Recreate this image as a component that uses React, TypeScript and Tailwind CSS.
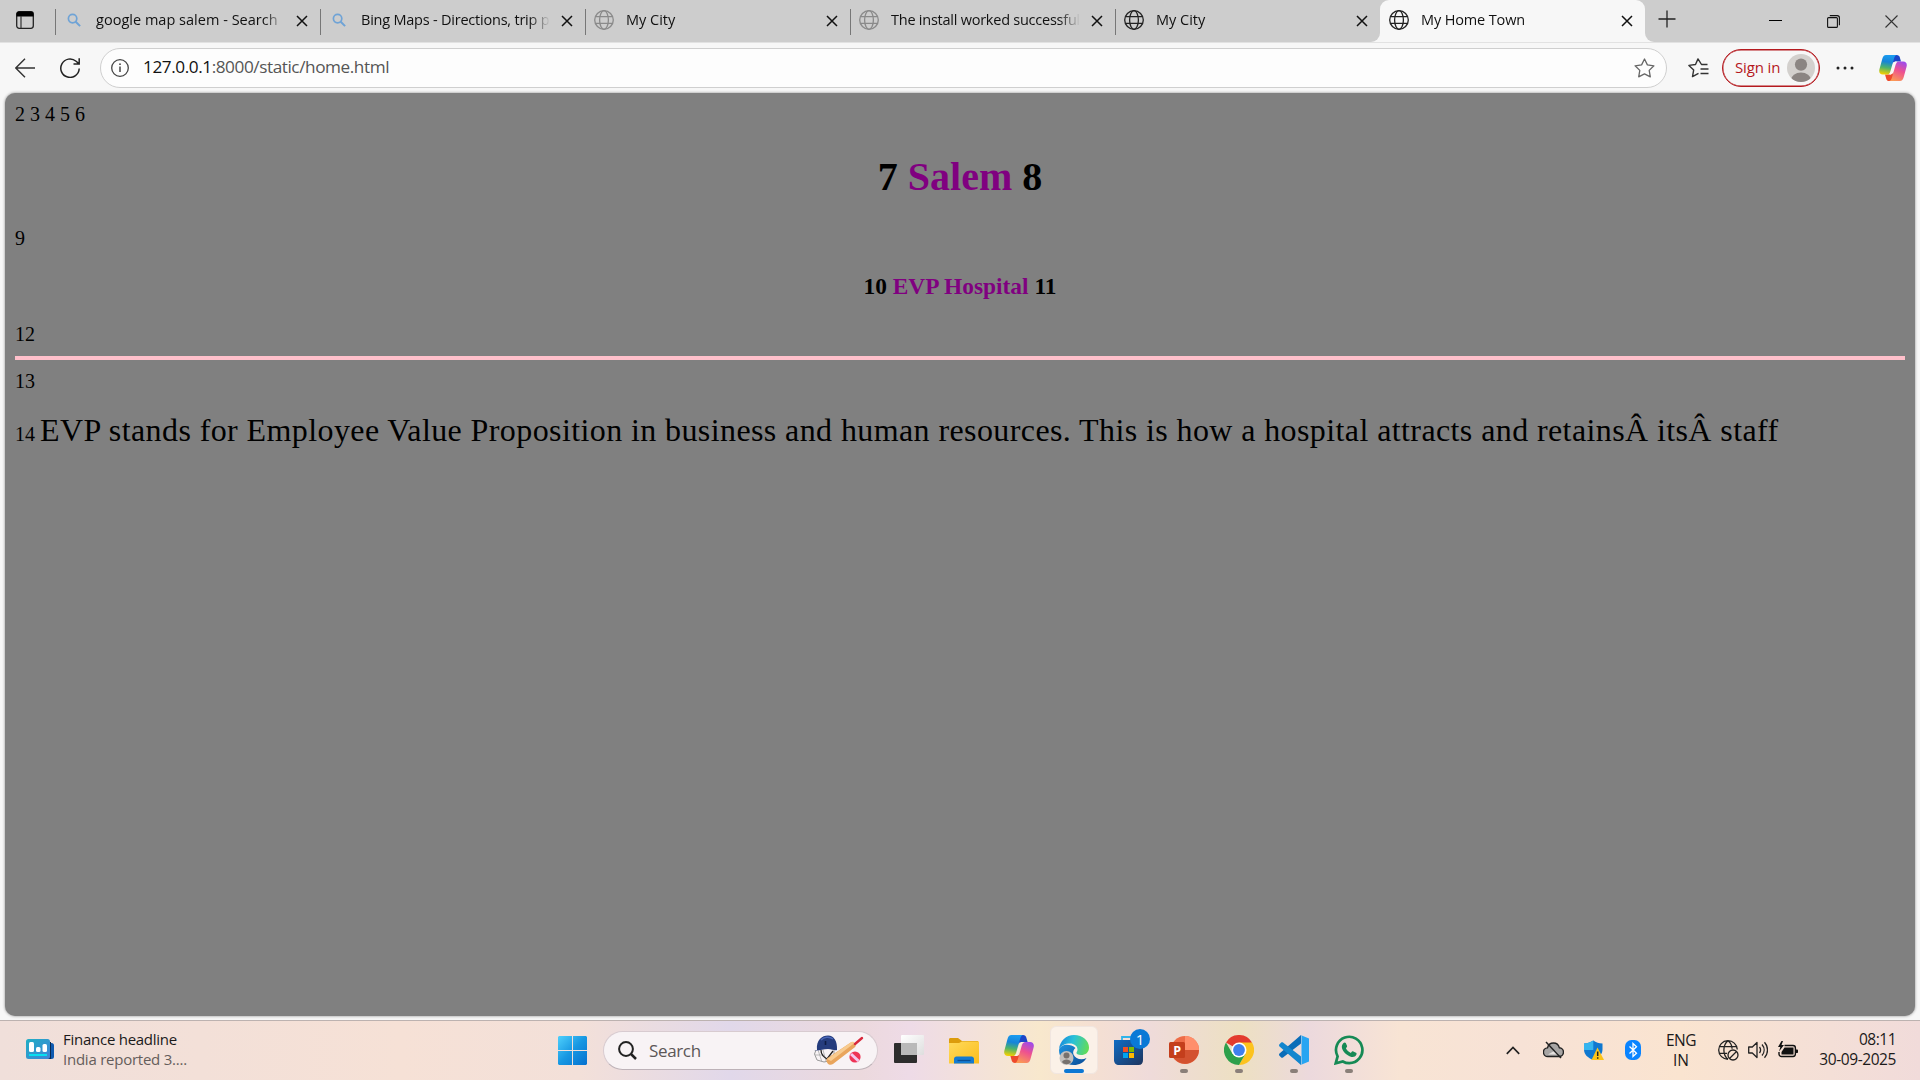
import React from "react";

const UI = "font-['Open_Sans','Noto_Sans',sans-serif]";

function GlobeIcon({ className }: { className: string }) {
  return (
    <svg className={className} width="20" height="20" viewBox="0 0 20 20" fill="none" stroke="currentColor" strokeWidth="1.3">
      <circle cx="10" cy="10" r="9.3" />
      <ellipse cx="10" cy="10" rx="4.4" ry="9.3" />
      <path d="M1.5 6.6h17M1.5 13.4h17" />
    </svg>
  );
}

function LensIcon() {
  return (
    <svg className="ml-[3px] mr-[3px] text-[#6fa3d6]" width="14" height="14" viewBox="0 0 14 14" fill="none" stroke="currentColor" strokeWidth="1.7">
      <circle cx="5.6" cy="5.6" r="4.2" />
      <path d="M8.7 8.7l4.4 4.4" strokeWidth="2" />
    </svg>
  );
}

function CloseIcon() {
  return (
    <svg width="12" height="12" viewBox="0 0 12 12" fill="none" stroke="#111" strokeWidth="1.5">
      <path d="M1 1l10 10M11 1L1 11" />
    </svg>
  );
}

function CopilotIcon({ id, width, height }: { id: string; width: number; height: number }) {
  return (
    <svg width={width} height={height} viewBox="0 0 30 28">
      <defs>
        <linearGradient id={id + "a"} x1="0.5" y1="0" x2="0.35" y2="1">
          <stop offset="0" stopColor="#1a9cf0" />
          <stop offset="0.35" stopColor="#1684d8" />
          <stop offset="0.65" stopColor="#4db36b" />
          <stop offset="1" stopColor="#f5d000" />
        </linearGradient>
        <linearGradient id={id + "b"} x1="0.7" y1="0" x2="0.3" y2="1">
          <stop offset="0" stopColor="#a04be8" />
          <stop offset="0.45" stopColor="#ee5190" />
          <stop offset="1" stopColor="#fb9a55" />
        </linearGradient>
      </defs>
      <path d="M15 0h4c2 0 2.800 1 3.300 2.500L23.600 7H18c-2 0-3 .8-3.600 2.600z" fill="#1b45c8" />
      <path d="M15 28h-4c-2 0-2.800-1-3.300-2.500L6.400 21H12c2 0 3-.8 3.600-2.600z" fill="#ee4a2c" />
      <path d="M7.500 0H19c-1.500.4-2.200 1.600-2.700 3.200l-4.100 14.200c-.7 2.400-1.700 3.600-4 3.600H4c-3 0-4.500-2.400-3.600-5.600L3.500 4C4.200 1.500 5.300 0 7.500 0z" fill={"url(#" + id + "a)"} />
      <path d="M22.500 28H11c1.500-.4 2.200-1.600 2.700-3.200l4.100-14.200c.7-2.400 1.700-3.600 4-3.600H26c3 0 4.500 2.400 3.600 5.600L26.500 24c-.7 2.500-1.800 4-4 4z" fill={"url(#" + id + "b)"} />
      <path d="M17.600 7h1.900c-2.200.8-3 2.200-3.700 4.300l-3 9.700h-2c1.500-.8 2-1.700 2.600-3.500l2.300-8C16.200 8.200 16.800 7.500 17.600 7z" fill="#fdf3ec" />
    </svg>
  );
}

type TabProps = { title: string; icon: "lens" | "dim" | "dark"; active?: boolean; tracking: string };

function Tab({ title, icon, active, tracking }: TabProps) {
  return (
    <div className={"relative flex h-[42px] w-[265px] shrink-0 items-start " + (active ? "rounded-t-[9px] bg-[#f7f7f7]" : "")}>
      {active && (
        <>
          <div className="absolute -left-[9px] bottom-0 size-[9px] bg-[#f7f7f7]"><div className="size-full rounded-br-[9px] bg-[#cdcdcd]" /></div>
          <div className="absolute -right-[9px] bottom-0 size-[9px] bg-[#f7f7f7]"><div className="size-full rounded-bl-[9px] bg-[#cdcdcd]" /></div>
        </>
      )}
      <div className={"mt-[9px] h-[26px] w-px " + (active ? "" : "bg-[#777]")} />
      <div className="ml-[8px] mt-[10px] flex h-[20px] w-[20px] items-center">
        {icon === "lens" ? <LensIcon /> : <GlobeIcon className={icon === "dim" ? "text-[#8a8a8a]" : "text-[#222]"} />}
      </div>
      <div className="ml-[12px] mt-[9px] w-[191px] [mask-image:linear-gradient(to_right,black_168px,transparent_189px)]">
        <div className={"whitespace-nowrap text-[14.5px] leading-[22px] text-[#111] " + tracking}>{title}</div>
      </div>
      <div className="ml-[9px] mt-[14.500px]"><CloseIcon /></div>
    </div>
  );
}

function TabStrip() {
  return (
    <div className="flex h-[42px] bg-[#cdcdcd]">
      <div className="w-[55px] shrink-0 pl-[16px] pt-[11px]">
        <svg width="18" height="18" viewBox="0 0 18 18" fill="none">
          <rect x=".7" y=".7" width="16.600" height="16.600" rx="2.500" stroke="#222" strokeWidth="1.300" />
          <path d="M.5 5.500V3A2.500 2.500 0 013 .5h12A2.500 2.500 0 0117.500 3v2.500z" fill="#000" />
          <path d="M5 5v12" stroke="#333" strokeWidth="1.200" />
        </svg>
      </div>
      <Tab title="google map salem - Search" icon="lens" tracking="tracking-[0.02px]" />
      <Tab title="Bing Maps - Directions, trip p" icon="lens" tracking="tracking-[-0.22px]" />
      <Tab title="My City" icon="dim" tracking="tracking-[0px]" />
      <Tab title="The install worked successful" icon="dim" tracking="tracking-[-0.24px]" />
      <Tab title="My City" icon="dark" tracking="tracking-[0px]" />
      <Tab title="My Home Town" icon="dark" active tracking="tracking-[-0.14px]" />
      <svg className="ml-[13px] mt-[10px]" width="18" height="18" viewBox="0 0 18 18" stroke="#222" strokeWidth="1.300"><path d="M9 .5v17M.5 9h17" /></svg>
      <div className="ml-auto mr-[22px] flex items-start">
        <div className="mr-[45px] mt-[20px] h-px w-[13px] bg-black" />
        <svg className="mr-[45px] mt-[15px]" width="13" height="13" viewBox="0 0 13 13" fill="none" stroke="#111" strokeWidth="1.100">
          <rect x=".6" y="2.600" width="9.800" height="9.800" rx="1" />
          <path d="M2.800.6h7.400a2.200 2.200 0 012.200 2.200v7.400" />
        </svg>
        <svg className="mt-[15px]" width="13" height="13" viewBox="0 0 13 13" stroke="#333" strokeWidth="1.100"><path d="M.5.5l12 12M12.500.5l-12 12" /></svg>
      </div>
    </div>
  );
}

function Toolbar() {
  return (
    <div className="flex h-[51px] items-start border-t border-[#e2e2e2] bg-[#f7f7f7]">
      <svg className="ml-[15px] mt-[15px]" width="20" height="20" viewBox="0 0 20 20" fill="none" stroke="#333" strokeWidth="1.400"><path d="M20 10H.8M10 .8L.8 10l9.200 9.200" /></svg>
      <svg className="ml-[25px] mt-[15px]" width="20" height="20" viewBox="0 0 20 20" fill="none" stroke="#222" strokeWidth="1.500"><path d="M19.200 10.500a9.200 9.200 0 11-3.100-7.200l3 2.600M19.200.3v5.700h-5.700" /></svg>
      <div className="ml-[20px] mt-[5px] flex h-[40px] w-[1567px] items-center rounded-full border border-[#cfcfcf] bg-[#fdfdfd] pl-[10px] pr-[11px]">
        <svg width="18" height="18" viewBox="0 0 18 18" fill="none" stroke="#444" strokeWidth="1.300">
          <circle cx="9" cy="9" r="8.300" />
          <path d="M9 7.600v5.400" strokeWidth="1.500" />
          <circle cx="9" cy="5.200" r=".9" fill="#444" stroke="none" />
        </svg>
        <div className="-mt-[2px] ml-[14px] whitespace-nowrap text-[17.200px] leading-[24px] tracking-[-0.43px] text-[#555]">
          <span className="text-[#111]">127.0.0.1</span>:8000/static/home.html
        </div>
        <svg className="ml-auto" width="21" height="20" viewBox="0 0 21 20" fill="none" stroke="#666" strokeWidth="1.300" strokeLinejoin="round">
          <path d="M10.500 1l2.900 5.900 6.500.9-4.700 4.600 1.100 6.400-5.800-3-5.800 3 1.100-6.400L1.100 7.800l6.500-.9z" />
        </svg>
      </div>
      <svg className="ml-[21px] mt-[15px]" width="21" height="20" viewBox="0 0 21 20" fill="none" stroke="#333" strokeWidth="1.400" strokeLinejoin="round">
        <path d="M19.500 6.500h-6L10 .9 7.500 6.500l-6.600.9 4.800 4.500-1.200 6.700 6-3.300M12.500 11h8M12.500 15.500h8" />
      </svg>
      <div className="ml-[13px] mt-[6px] flex h-[38px] w-[98px] items-center rounded-full border border-[#b51a1f] pl-[12px] shadow-[inset_0_0_0_.4px_#b51a1f]">
        <span className="-mt-[2px] w-[52px] whitespace-nowrap text-[15px] leading-[20px] tracking-[-0.15px] text-[#b5181d]">Sign in</span>
        <svg width="28" height="28" viewBox="0 0 28 28">
          <clipPath id="avatarClip"><circle cx="14" cy="14" r="14" /></clipPath>
          <g clipPath="url(#avatarClip)">
            <rect width="28" height="28" fill="#d3d0cd" />
            <circle cx="14" cy="10.600" r="6.100" fill="#8b8582" />
            <ellipse cx="14" cy="26" rx="10" ry="7.500" fill="#8b8582" />
          </g>
        </svg>
      </div>
      <svg className="ml-[16px] mt-[23px]" width="18" height="4" viewBox="0 0 18 4" fill="#222"><circle cx="2" cy="2" r="1.500" /><circle cx="9" cy="2" r="1.500" /><circle cx="16" cy="2" r="1.500" /></svg>
      <div className="ml-[25px] mt-[12px]"><CopilotIcon id="cpTop" width={28} height={26} /></div>
    </div>
  );
}

function Page() {
  return (
    <div className="mx-[5px] h-[923px] overflow-hidden rounded-[10px] bg-[#808080] px-[10px] pt-[10px] font-['Liberation_Serif',serif] text-[20px] leading-[23px] text-black shadow-[0_0_3px_#888]">
      <p>2 3 4 5 6</p>
      <h1 className="mt-[28px] text-center text-[40px] font-bold leading-[46px]">7 <span className="text-[#800080]">Salem</span> 8</h1>
      <p className="mt-[27px]">9</p>
      <h3 className="mt-[23px] text-center text-[23.400px] font-bold leading-[27px]">10 <span className="text-[#800080]">EVP Hospital</span> 11</h3>
      <p className="mt-[23px]">12</p>
      <hr className="mt-[10px] h-[4px] border-0 bg-[#ffc0cb]" />
      <p className="mt-[10px]">13</p>
      <p className="mt-[17px] whitespace-nowrap leading-[40px]">
        14 <span className="text-[32px] tracking-[0.4px]">EVP stands for Employee Value Proposition in business and human resources. This is how a hospital attracts and retainsÂ itsÂ staff</span>
      </p>
    </div>
  );
}

function Cell({ children, running }: { children: React.ReactNode; running?: boolean }) {
  return (
    <div className="relative flex h-[60px] w-[55px] items-center justify-center">
      {children}
      {running && <div className="absolute bottom-[7px] left-[24px] h-[4px] w-[8px] rounded-full bg-[#8a7f79]" />}
    </div>
  );
}

function CricketIcon() {
  return (
    <svg width="52" height="31" viewBox="0 0 52 31" fill="none">
      <path d="M3 15L1.500 19 4 25l7 2 5-1 5-4V14" stroke="#999" strokeWidth="1" />
      <path d="M2 20h9M5 15l4 12M10 15l3 11" stroke="#aaa" strokeWidth=".8" />
      <path d="M8 15c0 5 3 7 6 9l6-8" stroke="#222" strokeWidth="1.300" />
      <path d="M4 15C3 5 9 .5 15 .5S24.500 6 24 15c-2 1-5-1-9-1-5 0-8 2-14 1.500z" fill="#253c7d" />
      <path d="M8 5c3-3 8-4 12-1" stroke="#4b68b8" strokeWidth="1.500" />
      <path d="M12.500 6v4" stroke="#0d1b44" strokeWidth="1.600" />
      <path d="M37 8c2-2 4-1 5 .5s1 3-.5 4L20 29c-2 1.300-4 .8-5.500-.8S13 24 14.500 23z" fill="#e9a55c" />
      <path d="M37 8c2-2 4-1 4.500 0L18 26l-4-2z" fill="#f8cb8f" />
      <path d="M42 9l7-6" stroke="#d8283c" strokeWidth="2.400" strokeLinecap="round" />
      <circle cx="42" cy="22" r="5.600" fill="#ee3355" />
      <path d="M38 19l7.500 7" stroke="#f4c7ee" strokeWidth="3" />
    </svg>
  );
}

function EdgeIcon() {
  return (
    <svg width="30" height="30" viewBox="0 0 30 30">
      <defs>
        <linearGradient id="edgeTop" x1="0" y1="0.300" x2="1" y2="0.500">
          <stop offset="0" stopColor="#1689dc" /><stop offset=".45" stopColor="#2ac1d8" /><stop offset="1" stopColor="#62dc58" />
        </linearGradient>
        <linearGradient id="edgeLow" x1="0" y1="0" x2="1" y2="1">
          <stop offset="0" stopColor="#1c93e0" /><stop offset="1" stopColor="#0b4c96" />
        </linearGradient>
      </defs>
      <path d="M0 15c0 8 6 15 15 15 5 0 10-2.500 12.500-7-5 2.500-11 1-13-3.500-1-2.500 0-5 2-6.500C12 9 2 8 0 15z" fill="url(#edgeLow)" />
      <path d="M0 14C1 6 7 0 15 0c9 0 15 6 15 12.500 0 5-3.500 7.500-8 7.500-3 0-5-1-4.500-2.500.3-.8 1-1.200 1-3C18.500 11 15 8.500 11 8.500 6 8.500 2 10.500 0 14z" fill="url(#edgeTop)" />
      <circle cx="7.500" cy="23" r="7" fill="#c3c0bd" />
      <circle cx="7.500" cy="20.500" r="3" fill="#77716d" />
      <path d="M3 27c1-3.500 8-3.500 9 0-2 3-7 3-9 0z" fill="#77716d" />
    </svg>
  );
}

function Taskbar() {
  return (
    <div className="flex h-[60px] border-t border-[#bcb2b0] bg-[linear-gradient(90deg,#f0dfda_0px,#f6e1d6_400px,#f3e0d9_580px,#e1d8ea_730px,#ecd9dd_860px,#eedbe7_910px,#f8e8cd_1040px,#f5e0d2_1090px,#efdbda_1150px,#ede0c2_1240px,#ecd9dd_1310px,#f8e4d4_1400px,#f7e2d6_1520px,#fae4d0_1680px,#f4dfd7_1830px,#f1dbda_1920px)]">
      <div className="flex w-[531px] items-start pl-[26px]">
        <svg className="mt-[18px]" width="28" height="20" viewBox="0 0 28 20">
          <defs><linearGradient id="fin" x1="0" y1="0" x2="1" y2="1"><stop stopColor="#20afc4" /><stop offset="1" stopColor="#3f83d8" /></linearGradient></defs>
          <rect x="16" y="4" width="12" height="16" rx="2.500" fill="#0f5ab0" />
          <rect x="15" y="3" width="10" height="17" fill="#0a2a52" />
          <rect width="24" height="20" rx="2.500" fill="url(#fin)" />
          <rect x="3" y="3" width="5" height="10" rx="1.500" fill="#fff" /><rect x="10" y="8" width="4.500" height="5" rx="1.500" fill="#fff" /><rect x="16.500" y="5" width="4.500" height="8" rx="1.500" fill="#fff" />
          <rect x="3" y="15" width="18" height="2" fill="#08dff0" />
        </svg>
        <div className="ml-[9px] mt-[8px] whitespace-nowrap text-[15px] leading-[20px]">
          <div className="tracking-[-0.26px] text-[#1b1a1a]">Finance headline</div>
          <div className="tracking-[-0.24px] text-[#655d5b]">India reported 3....</div>
        </div>
      </div>
      <div className="ml-[27px] flex items-start">
        <svg className="mt-[15px]" width="29" height="29" viewBox="0 0 29 29">
          <defs><linearGradient id="win" x1="0" y1="0" x2="1" y2="1"><stop stopColor="#4fd0fc" /><stop offset=".5" stopColor="#1797e2" /><stop offset="1" stopColor="#0570cf" /></linearGradient></defs>
          <path d="M1 0h13v14H0V1zM15 0h13l1 1v13H15zM0 15h14v14H1l-1-1zM15 15h14v13l-1 1H15z" fill="url(#win)" />
        </svg>
        <div className="ml-[16px] mt-[10px] flex h-[39px] w-[275px] items-center rounded-full border border-[#d8cbd0] border-b-[#bdb2b8] bg-[#f8f3f5] pl-[14px] pr-[12px]">
          <svg width="19" height="19" viewBox="0 0 19 19" fill="none" stroke="#222"><circle cx="8" cy="8" r="6.900" strokeWidth="2" /><path d="M13 13l5 5" strokeWidth="2.500" /></svg>
          <span className="ml-[12px] text-[17px] leading-[24px] tracking-[-0.35px] text-[#5c5757]">Search</span>
          <div className="ml-auto"><CricketIcon /></div>
        </div>
      </div>
      <div className="ml-[3px] -mt-px flex">
        <Cell>
          <svg className="-mt-[2px]" width="30" height="28" viewBox="0 0 30 28">
            <defs><linearGradient id="tv" x1="0" y1="0" x2="1" y2="1"><stop stopColor="#fff" /><stop offset="1" stopColor="#dedede" /></linearGradient></defs>
            <rect y="8" width="23" height="20" rx="1" fill="#2d2d2d" /><rect x="7" width="23" height="20" rx="1" fill="url(#tv)" /><rect x="7" y="8" width="16" height="12" fill="#b9b9b9" />
          </svg>
        </Cell>
        <Cell>
          <svg width="30" height="27" viewBox="0 0 30 27">
            <defs><linearGradient id="fold" x1="0" y1="0" x2="1" y2="1"><stop stopColor="#ffda5c" /><stop offset="1" stopColor="#fbbd1c" /></linearGradient></defs>
            <path d="M0 6V2.500C0 1.500.7 1 1.500 1H9l2 1.500L13 4H29v6H0z" fill="#dc9c0c" />
            <path d="M0 6h10l3-1.500h17V26.500H0z" fill="url(#fold)" />
            <path d="M5 26.500V22c0-1.500 1-2.500 2.500-2.500h15c1.500 0 2.500 1 2.500 2.500v4.500z" fill="#157bd2" /><path d="M8.500 23.500h13" stroke="#0a4f94" strokeWidth="1.300" />
          </svg>
        </Cell>
        <Cell><div className="-mt-[2px]"><CopilotIcon id="cpTask" width={30} height={28} /></div></Cell>
        <Cell>
          <div className="relative flex size-[48px] items-center justify-center rounded-[6px] border border-[#f1e6e0] bg-[#fbf1e8]">
            <EdgeIcon />
            <div className="absolute bottom-0 left-[13px] h-[4px] w-[20px] rounded-full bg-[#0c78d4]" />
          </div>
        </Cell>
        <Cell>
          <svg width="30" height="30" viewBox="0 0 30 30">
            <defs><linearGradient id="store" x1="0" y1="0" x2="1" y2="1"><stop stopColor="#0f6cc4" /><stop offset="1" stopColor="#1e355e" /></linearGradient></defs>
            <path d="M8 7V2h14v5" fill="none" stroke="#30b4ea" strokeWidth="1.800" />
            <path d="M0 5h29v20c0 3-1.500 5-4.500 5H5c-3 0-5-2-5-5z" fill="url(#store)" />
            <path d="M9 12h5v5H9z" fill="#f25022" /><path d="M15 12h5v5h-5z" fill="#7fba00" /><path d="M9 18h5v5H9z" fill="#00a4ef" /><path d="M15 18h5v5h-5z" fill="#ffb900" />
          </svg>
          <div className="absolute left-[29px] top-[9px] flex size-[20px] items-center justify-center rounded-full bg-[#0a79d6] text-[15px] leading-none text-white">1</div>
        </Cell>
        <Cell running>
          <svg width="30" height="29" viewBox="0 0 30 29">
            <circle cx="16" cy="14" r="14" fill="#ed6c47" /><path d="M16 0a14 14 0 0114 14H16z" fill="#ff8f6b" /><path d="M30 14a14 14 0 01-27 5V14z" fill="#d35230" />
            <rect y="6" width="16" height="16" rx="1.500" fill="#c43e1c" />
            <text x="4.200" y="18.500" fontSize="12.500" fontWeight="700" fill="#fff" fontFamily="Open Sans">P</text>
          </svg>
        </Cell>
        <Cell running>
          <svg width="30" height="30" viewBox="0 0 30 30">
            <path d="M15 15L2 7.500A15 15 0 0128 7.500z" fill="#e33b2e" />
            <path d="M15 7.500H28A15 15 0 0115 30l6.500-11.300z" fill="#fcc31e" />
            <path d="M2 7.500A15 15 0 0015 30l6.500-11.300L8.500 18.700z" fill="#2da04a" />
            <circle cx="15" cy="15" r="7.500" fill="#fff" /><circle cx="15" cy="15" r="5.900" fill="#3f7fee" />
          </svg>
        </Cell>
        <Cell running>
          <svg width="30" height="30" viewBox="0 0 30 30">
            <path d="M22 0v8.500L4 22.500c-.6.500-1.300.4-1.800 0L.5 20.800c-.7-.7-.6-1.600 0-2.200z" fill="#0b6db8" />
            <path d="M22 30v-8.500L4 7.500c-.6-.5-1.300-.4-1.800 0L.5 9.200c-.7.700-.6 1.600 0 2.200z" fill="#1286ce" />
            <path d="M21.500 0L30 3.500v23L21.500 30c1-.5 1-1 1-2V2c0-1 0-1.500-1-2z" fill="#27a5f2" />
          </svg>
        </Cell>
        <Cell running>
          <svg width="30" height="30" viewBox="0 0 30 30">
            <path d="M1.700 28.300l1.900-7A13.200 13.200 0 1115.300 28.200a13.200 13.200 0 01-6.500-1.700z" fill="none" stroke="#168a55" strokeWidth="2.700" />
            <path d="M9.500 8c.8-.8 2-.7 2.400.2l1.100 2.600c.3.800-.2 1.400-1.100 2.500 1 2.200 2.700 3.700 5 4.600 1.200-1.500 1.700-1.800 2.400-1.500l2.700 1.300c.7.400.7 1.200.3 2.100-.8 1.800-2.800 2.600-4.800 2.100C12 20.500 9 16.500 8 13.300 7.500 11.200 8 9.500 9.500 8z" fill="#168a55" />
          </svg>
        </Cell>
      </div>
      <div className="-mt-px ml-auto mr-[24px] flex items-center text-[#1c1a1a]">
        <svg className="mr-[23px]" width="14" height="9" viewBox="0 0 14 9" fill="none" stroke="#222" strokeWidth="1.700"><path d="M.8 7.800L7 1.500l6.200 6.300" /></svg>
        <svg className="mr-[20px]" width="21" height="18" viewBox="0 0 21 18" fill="none">
          <path d="M5 15.500a4.300 4.300 0 01-.5-8.600C5.300 3.500 8 2 10.500 2s5 1.500 5.800 4.700a4.400 4.400 0 01-.5 8.800z" fill="#a7a5a4" stroke="#222" strokeWidth="1.400" />
          <path d="M5 13.500l7-4 4 4z" fill="#e5e1df" /><path d="M3 1l15 16" stroke="#222" strokeWidth="1.500" />
        </svg>
        <svg className="mr-[21px]" width="20" height="21" viewBox="0 0 20 21">
          <path d="M0 3.500C4 3.500 7 2 9.300.500 12 2.500 15 3.500 18.500 3.500V9.500c0 5-4 8.500-9.200 10.500C4 18 0 14.500 0 9.500z" fill="#0f78d0" />
          <path d="M0 3.500C4 3.500 7 2 9.300.500V10H0z" fill="#35b5ef" />
          <path d="M13.500 7.500l6.500 12.500H7.500z" fill="#fcc419" /><path d="M13.700 11.500v4.500M13.700 17.200v1.500" stroke="#222" strokeWidth="1.500" />
        </svg>
        <svg className="mr-[25px]" width="16" height="20" viewBox="0 0 16 20"><rect width="16" height="20" rx="6.500" fill="#0a84ff" /><path d="M4.500 6.500l7 6.800L8 16.500v-13l3.500 3.200-7 6.800" fill="none" stroke="#fff" strokeWidth="1.300" /></svg>
        <div className="w-[30px] text-center text-[15.500px] leading-[20px]"><div className="tracking-[-0.5px]">ENG</div><div>IN</div></div>
        <svg className="ml-[22px]" width="21" height="21" viewBox="0 0 21 21" fill="none" stroke="#222" strokeWidth="1.300">
          <path d="M19.300 9.500A9.300 9.300 0 1010 19.300M10 .8C4.500 5 4.500 15 10 19.300M10 .8c2.500 2 4 5 4.100 8M1.500 6.600h17M1.500 13.400H9" /><circle cx="15" cy="15" r="5" /><path d="M11.500 18.500l7-7" />
        </svg>
        <svg className="ml-[9px]" width="20" height="18" viewBox="0 0 20 18" fill="none" stroke="#222" strokeWidth="1.300" strokeLinejoin="round"><path d="M.7 6h3.600L9 1.500v15L4.300 12H.7zM11.500 6c1.300 1.800 1.300 4.200 0 6M14 3.500c2.800 3.300 2.800 7.700 0 11M16.500 1.200c4 4.500 4 11 0 15.600" /></svg>
        <svg className="ml-[10px]" width="20" height="18" viewBox="0 0 20 18" fill="none">
          <path d="M6.500 4.500H15A2.500 2.500 0 0117.400 7v6a2.500 2.500 0 01-2.400 2.500H3.500A2.500 2.500 0 011 13v-2" stroke="#111" strokeWidth="1.400" />
          <path d="M6.500 6.500h9v7H3.500V11z" fill="#111" /><path d="M18 8.500h1c.5 0 1 .3 1 .8v1.900c0 .5-.5.8-1 .8h-1z" fill="#111" /><path d="M3.500 0L0 6h2.300L1 10.500 6 4H3.500L5 0z" fill="#111" />
        </svg>
        <div className="-mt-[2px] ml-[21px] w-[77px] text-right text-[15.500px] leading-[20px]"><div className="tracking-[-0.5px]">08:11</div><div className="whitespace-nowrap tracking-[-0.42px]">30-09-2025</div></div>
      </div>
    </div>
  );
}

export default function App() {
  return (
    <div className={"h-[1080px] w-[1920px] overflow-hidden bg-[#f7f7f7] " + UI}>
      <TabStrip />
      <Toolbar />
      <Page />
      <div className="h-[4px]" />
      <Taskbar />
    </div>
  );
}
